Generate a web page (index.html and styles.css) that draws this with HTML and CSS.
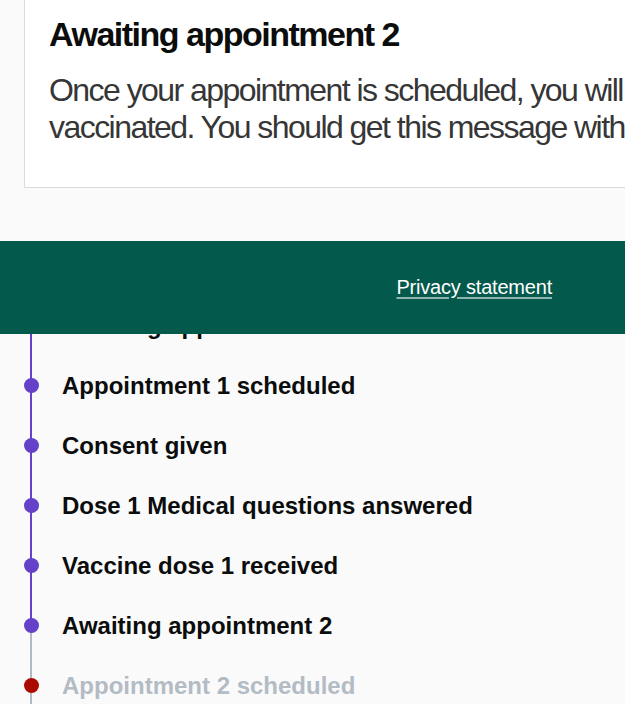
FILE: index.html
```html
<!DOCTYPE html>
<html lang="en">
<head>
<meta charset="utf-8">
<title>Vaccination status</title>
<link rel="stylesheet" href="styles.css">
</head>
<body>
<main class="page">
  <section class="card">
    <h2 class="card-title">Awaiting appointment 2</h2>
    <p class="card-text">Once your appointment is scheduled, you will get a message telling you<br>vaccinated. You should get this message within a few weeks.</p>
  </section>

  <ol class="timeline">
    <li class="step done">Awaiting appointment 1</li>
    <li class="step done">Appointment 1 scheduled</li>
    <li class="step done">Consent given</li>
    <li class="step done">Dose 1 Medical questions answered</li>
    <li class="step done">Vaccine dose 1 received</li>
    <li class="step current">Awaiting appointment 2</li>
    <li class="step next">Appointment 2 scheduled</li>
    <li class="step todo">Dose 2 Medical questions answered</li>
  </ol>
</main>

<footer class="footer">
  <a class="footer-link" href="#">Privacy statement</a>
</footer>
</body>
</html>
```

FILE: styles.css
```css
html, body {
  margin: 0;
  padding: 0;
}

body {
  background: #fafafa;
  font-family: "Liberation Sans", Arial, sans-serif;
  color: #0b0c0c;
  overflow: hidden;
  height: 704px;
  position: relative;
}

.page {
  display: flex;
  flex-direction: column;
}

.card {
  margin: -11px 0 0 24px;
  width: 760px;
  flex: none;
  background: #ffffff;
  border: 1px solid #d8dde0;
  padding: 24px 24px 24px 24px;
  box-sizing: border-box;
}

.card-title {
  margin: 0;
  font-size: 34px;
  line-height: 41px;
  font-weight: 700;
  letter-spacing: -1.5px;
  color: #0b0c0c;
}

.card-text {
  margin: 17px 0 17px;
  font-size: 32px;
  line-height: 37px;
  letter-spacing: -1.55px;
  color: #363636;
  white-space: nowrap;
}

.timeline {
  list-style: none;
  margin: 108px 0 0;
  padding: 0;
}

.step {
  position: relative;
  height: 60px;
  display: flex;
  align-items: center;
  padding-left: 62px;
  font-size: 24px;
  font-weight: 700;
  color: #0b0c0c;
}

.step::before {
  content: "";
  position: absolute;
  left: 30px;
  top: 0;
  bottom: 0;
  width: 2px;
  background: #6441c8;
}

.step::after {
  content: "";
  position: absolute;
  left: 24px;
  top: 22px;
  width: 15px;
  height: 15px;
  border-radius: 50%;
  background: #6441c8;
}

.step.current::before {
  background: linear-gradient(#6441c8 0 50%, #b1b9c2 50% 100%);
}

.step.next,
.step.todo {
  color: #b3bcc4;
}

.step.next::before,
.step.todo::before {
  background: #b1b9c2;
}

.step.next::after {
  background: #aa0a00;
}

.step.todo::after {
  background: #b1b9c2;
}

.footer {
  position: absolute;
  top: 241px;
  left: 0;
  right: 0;
  height: 93px;
  background: #035a4c;
  display: flex;
  align-items: center;
  justify-content: flex-end;
  padding-right: 73px;
}

.footer-link {
  color: #ffffff;
  font-size: 20px;
  letter-spacing: -0.2px;
  text-decoration: underline;
  text-decoration-color: rgba(255, 255, 255, 0.55);
  text-decoration-thickness: 2px;
  text-underline-offset: 3px;
}
```
